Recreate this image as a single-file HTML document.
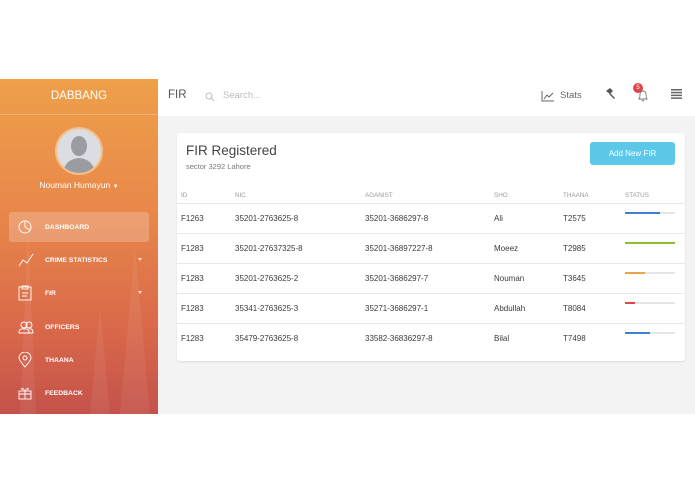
<!DOCTYPE html>
<html><head><meta charset="utf-8">
<style>
*{box-sizing:border-box;margin:0;padding:0}
body{width:695px;height:494px;background:#fff;font-family:"Liberation Sans",sans-serif;position:relative;overflow:hidden}
.app{position:absolute;left:0;top:79px;width:695px;height:335px;background:#f3f3f3}
.side{position:absolute;left:0;top:0;width:158px;height:335px;background:linear-gradient(180deg,#eea04a 0%,#e8874a 40%,#d9684a 75%,#c4524a 100%);overflow:hidden}
.side .brand{height:36px;line-height:34px;text-align:center;color:#fff;font-size:11.5px;border-bottom:1px solid rgba(255,255,255,.25)}
.avatar{position:absolute;left:55px;top:48px;width:48px;height:48px;border-radius:50%;background:#dcdde0;border:2px solid #f4c08a;overflow:hidden}
.uname{position:absolute;left:0;width:158px;top:101px;text-align:center;color:#fff;font-size:8.5px}
.nav{position:absolute;left:9px;width:140px;height:30px;color:#fff;font-size:6.8px;font-weight:bold;display:flex;align-items:center}
.nav svg{position:absolute;left:9px}
.nav span{position:absolute;left:36px}
.nav.act{background:rgba(255,255,255,.22);border-radius:3px}
.car{position:absolute;right:7px;top:13px;border:2.5px solid transparent;border-top:3px solid rgba(255,255,255,.8)}
.top{position:absolute;left:158px;top:0;width:537px;height:37px;background:#fff}
.card{position:absolute;left:177px;top:54px;width:508px;height:228px;background:#fff;border-radius:3px;box-shadow:0 1px 2px rgba(0,0,0,.1)}
.th{position:absolute;top:59px;font-size:6.3px;color:#999}
.row{position:absolute;left:0;width:508px;height:30px;border-top:1px solid #e8e8e8;font-size:8px;color:#3a3a3a}
.row div{position:absolute;top:10px}
.bar{position:absolute;left:448px;top:8px!important;width:50px;height:2px;background:#e5e5e5}
.bar i{display:block;height:2px}
</style></head><body>
<div class="app">
 <div class="side">
  <svg width="158" height="335" style="position:absolute;left:0;top:0;opacity:.06">
   <polygon points="20,335 28,150 36,335" fill="#fff"/><polygon points="120,335 135,170 150,335" fill="#fff"/><polygon points="90,335 100,230 110,335" fill="#fff"/>
  </svg>
  <div class="brand">DABBANG</div>
  <div class="avatar"><svg width="44" height="44" viewBox="0 0 44 44"><ellipse cx="22" cy="17" rx="8" ry="10" fill="#9a9ca2"/><path d="M6 44 Q8 30 22 29 Q36 30 38 44Z" fill="#9a9ca2"/></svg></div>
  <div class="uname">Nouman Humayun <span style="font-size:6px">▼</span></div>
  <div class="nav act" style="top:133px"><svg width="14" height="14" viewBox="0 0 14 14" fill="none" stroke="#fff" stroke-width=".9"><circle cx="7" cy="7" r="6"/><path d="M7 1V7L12 10"/></svg><span>DASHBOARD</span></div>
  <div class="nav" style="top:166px"><svg width="16" height="14" viewBox="0 0 16 14" fill="none" stroke="#fff" stroke-width=".9"><path d="M1 13L5 7L9 10L15 1"/></svg><span>CRIME STATISTICS</span><i class="car"></i></div>
  <div class="nav" style="top:199px"><svg width="14" height="16" viewBox="0 0 14 16" fill="none" stroke="#fff" stroke-width=".9"><rect x="1" y="2" width="12" height="13"/><rect x="4" y="1" width="6" height="3"/><path d="M4 8H10M4 11H9"/></svg><span>FIR</span><i class="car"></i></div>
  <div class="nav" style="top:233px"><svg width="16" height="14" viewBox="0 0 16 14" fill="none" stroke="#fff" stroke-width=".9"><circle cx="6" cy="5" r="3"/><circle cx="11" cy="5" r="3"/><path d="M1 13Q1 8 6 9Q11 8 11 13ZM11 9Q15 8 15 13H11"/></svg><span>OFFICERS</span></div>
  <div class="nav" style="top:266px"><svg width="14" height="16" viewBox="0 0 14 16" fill="none" stroke="#fff" stroke-width=".9"><path d="M7 15Q1 8 1 6A6 6 0 0 1 13 6Q13 8 7 15Z"/><circle cx="7" cy="6" r="2"/></svg><span>THAANA</span></div>
  <div class="nav" style="top:299px"><svg width="14" height="14" viewBox="0 0 14 14" fill="none" stroke="#fff" stroke-width=".9"><rect x="1" y="5" width="12" height="8"/><path d="M1 8H13M7 5V13M7 5Q3 0 4 4M7 5Q11 0 10 4"/></svg><span>FEEDBACK</span></div>
 </div>
 <div class="top">
  <div style="position:absolute;left:10px;top:10px;font-size:11.5px;color:#555">FIR</div>
  <svg style="position:absolute;left:47px;top:13px" width="10" height="10" viewBox="0 0 10 10" fill="none" stroke="#bbb" stroke-width="1"><circle cx="4" cy="4" r="3"/><path d="M6.3 6.3L9 9"/></svg>
  <div style="position:absolute;left:65px;top:11px;font-size:9.5px;color:#bbb">Search...</div>
  <svg style="position:absolute;left:383px;top:11px" width="14" height="12" viewBox="0 0 14 12" fill="none" stroke="#666" stroke-width="1"><path d="M1 1V11H13M3 9L6 5L8 7L12 3"/></svg>
  <div style="position:absolute;left:402px;top:11px;font-size:9.5px;color:#666">Stats</div>
  <svg style="position:absolute;left:446px;top:9px" width="12" height="12" viewBox="0 0 12 12" fill="#555"><path d="M2 3L6 0L9 3L6 6Z"/><path d="M6 5L11 10L10 11L5 6Z"/></svg>
  <svg style="position:absolute;left:479px;top:10px" width="12" height="13" viewBox="0 0 12 13" fill="none" stroke="#777" stroke-width=".9"><path d="M2 10Q3 9 3 5A3 3 0 0 1 9 5Q9 9 10 10Z M5 11Q6 13 7 11"/></svg>
  <div style="position:absolute;left:475px;top:4px;width:10px;height:10px;border-radius:50%;background:#e0454b;color:#fff;font-size:6px;text-align:center;line-height:10px">5</div>
  <svg style="position:absolute;left:513px;top:10px" width="11" height="10" viewBox="0 0 11 10" fill="#666"><rect y="0" width="11" height="1.5"/><rect y="2.8" width="11" height="1.5"/><rect y="5.6" width="11" height="1.5"/><rect y="8.4" width="11" height="1.5"/></svg>
 </div>
 <div class="card">
  <div style="position:absolute;left:9px;top:10px;font-size:13.5px;color:#444">FIR Registered</div>
  <div style="position:absolute;left:9px;top:29px;font-size:7.5px;color:#777">sector 3292 Lahore</div>
  <div style="position:absolute;left:413px;top:9px;width:85px;height:23px;background:#5bc8ea;border-radius:3px;color:#fff;font-size:8px;text-align:center;line-height:23px">Add New FIR</div>
  <div class="th" style="left:4px">ID</div><div class="th" style="left:58px">NIC</div><div class="th" style="left:188px">AGANIST</div><div class="th" style="left:317px">SHO</div><div class="th" style="left:386px">THAANA</div><div class="th" style="left:448px">STATUS</div>
  <div class="row" style="top:70px"><div style="left:4px">F1263</div><div style="left:58px">35201-2763625-8</div><div style="left:188px">35201-3686297-8</div><div style="left:317px">Ali</div><div style="left:386px">T2575</div><div class="bar"><i style="width:35px;background:#3d7fd6"></i></div></div>
  <div class="row" style="top:100px"><div style="left:4px">F1283</div><div style="left:58px">35201-27637325-8</div><div style="left:188px">35201-36897227-8</div><div style="left:317px">Moeez</div><div style="left:386px">T2985</div><div class="bar"><i style="width:50px;background:#8ebd2e"></i></div></div>
  <div class="row" style="top:130px"><div style="left:4px">F1283</div><div style="left:58px">35201-2763625-2</div><div style="left:188px">35201-3686297-7</div><div style="left:317px">Nouman</div><div style="left:386px">T3645</div><div class="bar"><i style="width:20px;background:#eea04a"></i></div></div>
  <div class="row" style="top:160px"><div style="left:4px">F1283</div><div style="left:58px">35341-2763625-3</div><div style="left:188px">35271-3686297-1</div><div style="left:317px">Abdullah</div><div style="left:386px">T8084</div><div class="bar"><i style="width:10px;background:#e0454b"></i></div></div>
  <div class="row" style="top:190px"><div style="left:4px">F1283</div><div style="left:58px">35479-2763625-8</div><div style="left:188px">33582-36836297-8</div><div style="left:317px">Bilal</div><div style="left:386px">T7498</div><div class="bar"><i style="width:25px;background:#3d7fd6"></i></div></div>
 </div>
</div>
</body></html>
